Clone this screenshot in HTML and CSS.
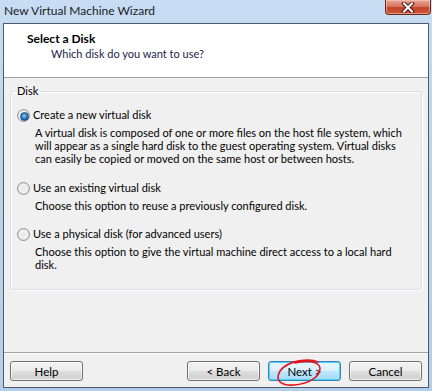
FILE: index.html
```html
<!DOCTYPE html>
<html lang="en">
<head>
    <meta charset="UTF-8">
    <title>New Virtual Machine Wizard</title>
    <link rel="stylesheet" href="styles.css">
</head>
<body>
    <div class="window">
        <div class="titlebar">
            <span class="title">New Virtual Machine Wizard</span>
            <div class="close-btn">
                <svg width="18" height="11" viewBox="0 0 18 11">
                    <path d="M5 1.5 L13 9.5 M13 1.5 L5 9.5" stroke="#4a1a12" stroke-width="4" stroke-linecap="square"/>
                    <path d="M5 1.5 L13 9.5 M13 1.5 L5 9.5" stroke="#ffffff" stroke-width="2" stroke-linecap="square"/>
                </svg>
            </div>
        </div>

        <div class="client">
            <div class="header">
                <h1 class="header-title">Select a Disk</h1>
                <p class="header-sub">Which disk do you want to use?</p>
            </div>

            <div class="body">
                <fieldset class="group">
                    <legend class="group-label">Disk</legend>

                    <div class="option">
                        <label class="option-label"><span class="radio checked"></span>Create a new virtual disk</label>
                        <p class="option-desc">A virtual disk is composed of one or more files on the host file system, which<br>will appear as a single hard disk to the guest operating system. Virtual disks<br>can easily be copied or moved on the same host or between hosts.</p>
                    </div>

                    <div class="option option-2">
                        <label class="option-label"><span class="radio"></span>Use an existing virtual disk</label>
                        <p class="option-desc">Choose this option to reuse a previously configured disk.</p>
                    </div>

                    <div class="option option-3">
                        <label class="option-label"><span class="radio"></span>Use a physical disk (for advanced users)</label>
                        <p class="option-desc">Choose this option to give the virtual machine direct access to a local hard<br>disk.</p>
                    </div>
                </fieldset>
            </div>

            <div class="footer">
                <button class="btn btn-help">Help</button>
                <button class="btn">&lt; Back</button>
                <button class="btn btn-default">Next &gt;</button>
                <button class="btn">Cancel</button>

                <!-- red marker scribble around Next -->
                <svg class="scribble" width="50" height="30" viewBox="0 0 50 30">
                    <path d="M44 3 C36 -1, 14 1, 6 12 C1 21, 6 27, 20 26 C33 25, 46 19, 46 9 C45 2, 31 1, 21 4" fill="none" stroke="#e3141b" stroke-width="1.6" stroke-linecap="round"/>
                </svg>
            </div>
        </div>
    </div>
</body>
</html>
```

FILE: styles.css
```css
* {
    margin: 0;
    padding: 0;
    box-sizing: border-box;
}

body {
    width: 432px;
    height: 391px;
    overflow: hidden;
    font-family: Lato, 'Liberation Sans', sans-serif;
    font-size: 11px;
    color: #000000;
}

/* Window frame */
.window {
    width: 432px;
    height: 391px;
    display: flex;
    flex-direction: column;
    padding: 0 3px 3px 3px;
    background: linear-gradient(180deg, #c8ddf3 0%, #bcd3ec 40%, #b4cde8 100%);
}

.titlebar {
    height: 23px;
    display: flex;
    align-items: flex-start;
    justify-content: space-between;
}

.title {
    padding: 4px 0 0 1px;
    font-size: 12px;
    color: #1b1b1b;
    line-height: 14px;
}

.close-btn {
    width: 46px;
    height: 15px;
    margin-right: -2px;
    display: flex;
    align-items: center;
    justify-content: center;
    border: 1px solid #6a2a1e;
    border-top: none;
    border-radius: 0 0 4px 4px;
    background: linear-gradient(180deg, #e9a999 0%, #d9755f 45%, #c3412a 55%, #d0583c 100%);
    box-shadow: inset 0 0 0 1px rgba(255, 210, 200, 0.5);
}

/* Client area */
.client {
    flex: 1;
    display: flex;
    flex-direction: column;
    border: 1px solid #4f5a68;
    background: #f0f0f0;
}

.header {
    height: 54px;
    background: #ffffff;
    border-bottom: 1px solid #a0a0a0;
    padding: 8px 0 0 23px;
}

.header-title {
    font-size: 12px;
    font-weight: 700;
    line-height: 14px;
}

.header-sub {
    margin: 1px 0 0 24px;
    line-height: 14px;
    color: #1c1c4a;
}

.body {
    flex: 1;
    padding: 6px 6px 0 6px;
}

/* Group box */
.group {
    border: 1px solid #d5dfe5;
    border-radius: 3px;
    box-shadow: inset 1px 1px 0 #ffffff, 1px 1px 0 #ffffff;
    padding: 10px 6px 18px 6px;
}

.group-label {
    padding: 0 2px;
    margin-left: -2px;
    line-height: 14px;
}

.option-2 {
    margin-top: 16px;
}

.option-3 {
    margin-top: 15px;
}

.option-label {
    display: flex;
    align-items: center;
    line-height: 14px;
    white-space: nowrap;
}

.option-desc {
    margin: 4px 0 0 18px;
    line-height: 13px;
    white-space: nowrap;
}

/* Radio button */
.radio {
    width: 13px;
    height: 13px;
    margin-right: 3px;
    border-radius: 50%;
    border: 1px solid #8f9396;
    background: radial-gradient(circle at 50% 50%, #e6e6e6 0%, #f4f4f4 55%, #ffffff 100%);
    box-shadow: inset 0 0 0 1px #dcdcdc;
    position: relative;
    flex-shrink: 0;
}

.radio.checked::after {
    content: "";
    position: absolute;
    left: 2px;
    top: 2px;
    width: 7px;
    height: 7px;
    border-radius: 50%;
    background: radial-gradient(circle at 45% 40%, #9ad0f3 0%, #2f7fc4 45%, #10467f 100%);
    border: 1px solid #1d4f86;
}

/* Footer buttons */
.footer {
    position: relative;
    height: 35px;
    border-top: 1px solid #a0a0a0;
    box-shadow: inset 0 1px 0 #ffffff;
    display: flex;
    align-items: flex-start;
    gap: 8px;
    padding: 8px 6px 0 6px;
}

.btn {
    width: 73px;
    height: 20px;
    font-family: Lato, 'Liberation Sans', sans-serif;
    font-size: 11.5px;
    color: #000000;
    border: 1px solid #707070;
    border-radius: 3px;
    background: linear-gradient(180deg, #f2f2f2 0%, #ebebeb 48%, #dddddd 52%, #cfcfcf 100%);
    box-shadow: inset 0 0 0 1px rgba(255, 255, 255, 0.7);
}

.btn-help {
    margin-right: auto;
}

.btn-default {
    border-color: #3c7fb1;
    background: linear-gradient(180deg, #eaf6fd 0%, #d9f0fc 48%, #bee6fd 52%, #a7d9f5 100%);
    box-shadow: inset 0 0 0 1px #48d6fe;
}

.scribble {
    position: absolute;
    left: 270px;
    top: 6px;
}
```
